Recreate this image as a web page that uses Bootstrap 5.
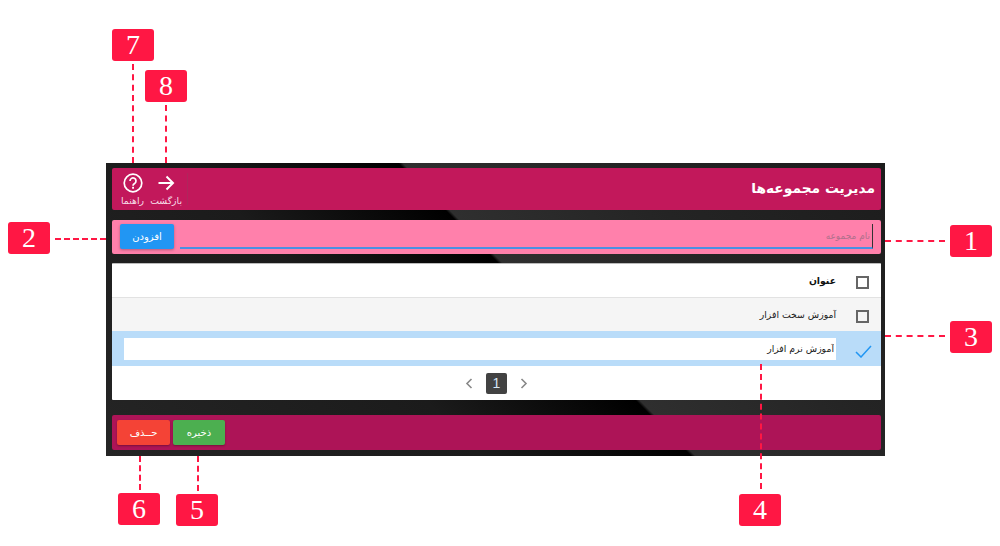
<!DOCTYPE html>
<html lang="fa">

<head>
    <meta charset="UTF-8">
    <title>مدیریت مجموعه‌ها</title>
    <meta name="viewport" content="width=device-width, initial-scale=1">
    <link href="https://cdn.jsdelivr.net/npm/bootstrap@5.3.3/dist/css/bootstrap.min.css" rel="stylesheet">
    <style>
        body { background: #fff; font-family: "DejaVu Sans", "Liberation Sans", sans-serif; height: 546px; overflow: hidden; }
        .stage { position: relative; width: 1000px; height: 546px; padding: 163px 115px 0 106px; }

        .frame {
            height: 293px; padding: 5px 4px 6px 6px;
            background: linear-gradient(45deg, #252525 0, #1b1b1b 35%, #000 54.6%, #2f2f2f 55%, #242424 75%, #1c1c1c 100%);
        }
        .title-bar { height: 42px; background: #c2185b; border-radius: 2px; color: #fff; padding: 0 6px 2px 4px; }
        .page-title { font-size: 13.8px; font-weight: 700; }
        .tool-group { width: 72px; height: 32px; margin-top: 2px; border-right: 1px solid #b0265c; padding-left: 5px; padding-right: 5px; }
        .tool-item { font-size: 9.3px; line-height: 11px; color: #f7dfe9; text-align: center; white-space: nowrap; }
        .tool-item svg { display: block; margin: 0 auto 2px; }

        .add-bar { height: 34px; margin-top: 10px; background: #ff80ab; border-radius: 2px; padding: 4px 8px 5px; }
        .name-input {
            height: 25px; flex: 1; margin-left: 6px; padding: 0 2px 0 0; font-size: 9px;
            background: transparent; border: 0; border-bottom: 2px solid #4a90e2; border-radius: 0;
            border-right: 1px solid #333; box-shadow: none;
        }
        .name-input::placeholder { color: #b0708c; }
        .add-btn { width: 54px; height: 25px; background: #2196f3; color: #fff; font-size: 10px; border: 0; border-radius: 2px; padding: 0; box-shadow: 0 1px 3px rgba(0,0,0,.3); }

        .list-panel { height: 137px; margin-top: 9px; background: #fff; border-top: 1px solid #bbb; border-radius: 1px; }
        .list-row { height: 33px; font-size: 9.3px; color: #222; border-bottom: 1px solid #e2e2e2; }
        .row-head { height: 34px; font-weight: 700; color: #111; }
        .row-plain { background: #f5f5f5; border-bottom: 0; }
        .row-picked { height: 35px; background: #b9dcf9; border-bottom: 0; padding-left: 12px; }
        .check-cell { width: 45px; flex: none; display: flex; padding: 3px 12px 0 0; }
        .row-picked .check-cell { padding: 5px 9px 0 0; }
        .check-box { width: 13px; height: 13px; border: 2px solid #666; display: block; }
        .edit-input { height: 22px; flex: 1; padding: 0 2px 0 0; font-size: 9.3px; color: #222; border: 0; border-radius: 0; background: #fff; }

        .pager { height: 34px; gap: 8px; }
        .pager-now { width: 21px; height: 21px; background: #424242; color: #d5e6f5; font-family: "Liberation Sans", sans-serif; font-size: 14px; border-radius: 2px; }

        .foot-bar { height: 35px; margin-top: 15px; background: #ad1457; border-radius: 2px; padding: 5px; gap: 3px; }
        .foot-btn { height: 25px; color: #fff; font-size: 10px; border: 0; border-radius: 2px; padding: 0; box-shadow: 0 1px 2px rgba(0,0,0,.3); }
        .btn-remove { width: 53px; background: #f44336; }
        .btn-store { width: 52px; background: #4caf50; }

        /* numbered callouts around the window */
        .callout { position: absolute; width: 42px; height: 32px; background: #ff1744; color: #fff; border-radius: 3px; font-family: "Liberation Serif", serif; font-size: 28px; line-height: 32px; text-align: center; }
        .lead-h { position: absolute; height: 0; border-top: 2px dashed #ff1744; }
        .lead-v { position: absolute; width: 0; border-left: 2px dashed #ff1744; }
    </style>
</head>

<body>
    <div class="stage">
        <div class="frame">
            <div class="title-bar d-flex align-items-center justify-content-between">
                <div class="tool-group d-flex justify-content-between align-items-center" dir="ltr">
                    <div class="tool-item">
                        <svg width="20" height="20" viewBox="0 0 20 20"><circle cx="10" cy="10" r="8.8" fill="none" stroke="#fff" stroke-width="1.7"/><path d="M7 8a3 3 0 1 1 4.6 2.5c-1 .6-1.6 1.1-1.6 2.2" fill="none" stroke="#fff" stroke-width="1.7"/><rect x="9.1" y="13.8" width="1.9" height="1.9" fill="#fff"/></svg>
                        راهنما
                    </div>
                    <div class="tool-item">
                        <svg width="20" height="20" viewBox="0 0 20 20"><path d="M2.5 10h14M10.5 3.5l6.5 6.5-6.5 6.5" fill="none" stroke="#fff" stroke-width="2"/></svg>
                        بازگشت
                    </div>
                </div>
                <div class="page-title" dir="rtl">مدیریت مجموعه‌ها</div>
            </div>

            <div class="add-bar d-flex">
                <button class="btn add-btn" type="button">افزودن</button>
                <input class="form-control name-input" dir="rtl" placeholder="نام مجموعه">
            </div>

            <div class="list-panel" dir="rtl">
                <div class="list-row row-head d-flex align-items-center">
                    <span class="check-cell"><span class="check-box"></span></span>
                    <span>عنوان</span>
                </div>
                <div class="list-row row-plain d-flex align-items-center">
                    <span class="check-cell"><span class="check-box"></span></span>
                    <span>آموزش سخت افزار</span>
                </div>
                <div class="list-row row-picked d-flex align-items-center">
                    <span class="check-cell">
                        <svg width="17" height="13" viewBox="0 0 17 13"><path d="M1 7l5 5L16 1" fill="none" stroke="#2196f3" stroke-width="1.5"/></svg>
                    </span>
                    <input class="form-control edit-input" dir="rtl" value="آموزش نرم افزار">
                </div>
                <div class="pager d-flex align-items-center justify-content-center" dir="ltr">
                    <svg width="9" height="11" viewBox="0 0 9 11"><path d="M6.5 1L2 5.5 6.5 10" fill="none" stroke="#888" stroke-width="1.6"/></svg>
                    <span class="pager-now d-flex align-items-center justify-content-center mx-1">1</span>
                    <svg width="9" height="11" viewBox="0 0 9 11"><path d="M2.5 1L7 5.5 2.5 10" fill="none" stroke="#888" stroke-width="1.6"/></svg>
                </div>
            </div>

            <div class="foot-bar d-flex align-items-start">
                <button class="btn foot-btn btn-remove" type="button">حــذف</button>
                <button class="btn foot-btn btn-store" type="button">ذخیره</button>
            </div>
        </div>

        <div class="callout" style="left:112px;top:29px">7</div>
        <div class="lead-v" style="left:132px;top:64px;height:99px"></div>
        <div class="callout" style="left:145px;top:70px">8</div>
        <div class="lead-v" style="left:165px;top:105px;height:58px"></div>
        <div class="callout" style="left:950px;top:225px">1</div>
        <div class="lead-h" style="left:885px;top:240px;width:60px"></div>
        <div class="callout" style="left:8px;top:222px">2</div>
        <div class="lead-h" style="left:55px;top:238px;width:51px"></div>
        <div class="callout" style="left:950px;top:321px">3</div>
        <div class="lead-h" style="left:885px;top:335px;width:60px"></div>
        <div class="callout" style="left:739px;top:494px">4</div>
        <div class="lead-v" style="left:760px;top:364px;height:125px"></div>
        <div class="callout" style="left:176px;top:494px">5</div>
        <div class="lead-v" style="left:197px;top:456px;height:35px"></div>
        <div class="callout" style="left:118px;top:493px">6</div>
        <div class="lead-v" style="left:139px;top:456px;height:34px"></div>
    </div>

    <script src="https://cdn.jsdelivr.net/npm/bootstrap@5.3.3/dist/js/bootstrap.bundle.min.js"></script>
</body>

</html>
